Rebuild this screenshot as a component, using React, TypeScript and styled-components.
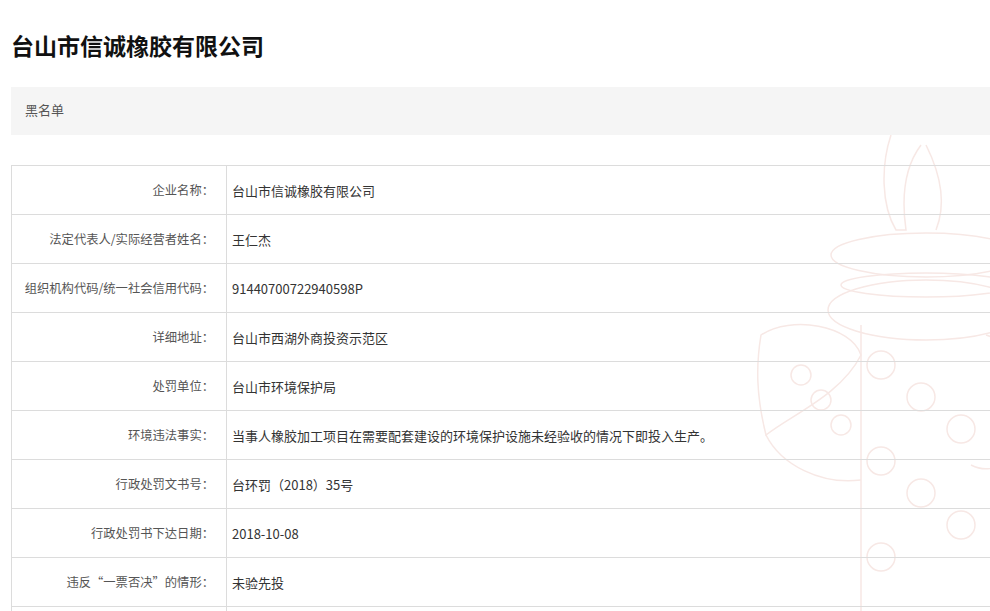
import styled, { createGlobalStyle } from "styled-components";

const GlobalStyle = createGlobalStyle`
  html, body { margin: 0; padding: 0; background: #fff; overflow: hidden; }
  body { font-family: "Liberation Serif", "Noto Sans CJK SC", serif; }
`;

const rows: [string, string][] = [
  ["企业名称：", "台山市信诚橡胶有限公司"],
  ["法定代表人/实际经营者姓名：", "王仁杰"],
  ["组织机构代码/统一社会信用代码：", "91440700722940598P"],
  ["详细地址：", "台山市西湖外商投资示范区"],
  ["处罚单位：", "台山市环境保护局"],
  ["环境违法事实：", "当事人橡胶加工项目在需要配套建设的环境保护设施未经验收的情况下即投入生产。"],
  ["行政处罚文书号：", "台环罚（2018）35号"],
  ["行政处罚书下达日期：", "2018-10-08"],
  ["违反“一票否决”的情形：", "未验先投"],
  ["", ""],
];

const App = () => (
  <Page>
    <GlobalStyle />
    <Title>台山市信诚橡胶有限公司</Title>
    <Bar>黑名单</Bar>
    <TableWrap>
      <Watermark viewBox="0 0 290 480" fill="none" stroke="#f7e8e5" strokeWidth="1.5">
        <path d="M160 0 C150 30 150 70 165 95 L175 95 C170 60 175 30 190 10" />
        <path d="M195 10 C210 40 215 70 205 95" />
        <ellipse cx="195" cy="120" rx="95" ry="22" />
        <ellipse cx="195" cy="150" rx="85" ry="12" />
        <ellipse cx="195" cy="175" rx="98" ry="30" />
        <path d="M130 190 L130 480 M260 190 L260 480" />
        <path d="M30 200 C60 180 120 190 130 220 C110 260 60 280 35 300 C25 260 25 230 30 200 Z" />
        <path d="M35 300 C50 330 90 350 130 345" />
        {[0, 1, 2, 3, 4, 5, 6].map((i) => (
          <circle key={i} cx={150 + (i % 3) * 40} cy={230 + i * 32} r="14" />
        ))}
        {[0, 1, 2].map((i) => (
          <circle key={"s" + i} cx={70 + i * 20} cy={240 + i * 25} r="10" />
        ))}
        <path d="M255 200 C290 210 300 260 290 300 C280 330 260 340 240 330" />
      </Watermark>
      <Table>
        <tbody>
          {rows.map(([k, v], i) => (
            <tr key={i}>
              <Label>{k}</Label>
              <Value>{v}</Value>
            </tr>
          ))}
        </tbody>
      </Table>
    </TableWrap>
  </Page>
);

export default App;

const Page = styled.div`
  padding: 0 0 0 11px;
  width: 1000px;
`;

const Title = styled.h1`
  margin: 0;
  padding-top: 28px;
  height: 87px;
  box-sizing: border-box;
  font-size: 23px;
  font-weight: bold;
  color: #111;
`;

const Bar = styled.div`
  background: #f5f5f5;
  height: 48px;
  line-height: 46px;
  padding-left: 14px;
  font-family: "Noto Sans CJK SC", sans-serif;
  font-size: 13px;
  color: #555;
  margin-bottom: 30px;
`;

const TableWrap = styled.div`
  position: relative;
`;

const Watermark = styled.svg`
  position: absolute;
  left: 720px;
  top: -30px;
  width: 290px;
  height: 480px;
  pointer-events: none;
`;

const Table = styled.table`
  position: relative;
  border-collapse: collapse;
  width: 1000px;
  font-family: "Noto Sans CJK SC", sans-serif;
  font-size: 13px;
  td {
    border: 1px solid #dcdcdc;
    height: 48px;
    padding: 0;
  }
`;

const Label = styled.td`
  width: 202px;
  text-align: right;
  padding-right: 12px !important;
  font-size: 12.3px;
  color: #555;
`;

const Value = styled.td`
  padding-left: 5px !important;
  color: #333;
`;
